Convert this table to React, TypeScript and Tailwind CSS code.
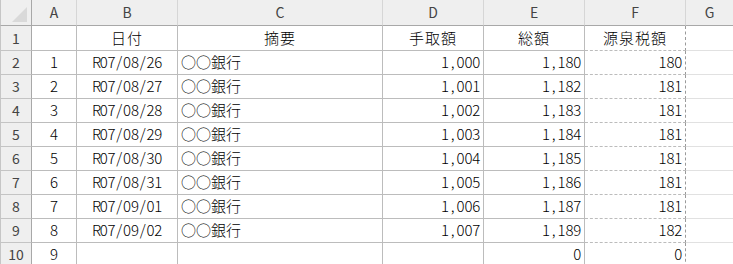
import React from 'react';

const cols = ['A', 'B', 'C', 'D', 'E', 'F', 'G'];

const rows: string[][] = [
  ['1', 'R07/08/26', '○○銀行', '1,000', '1,180', '180'],
  ['2', 'R07/08/27', '○○銀行', '1,001', '1,182', '181'],
  ['3', 'R07/08/28', '○○銀行', '1,002', '1,183', '181'],
  ['4', 'R07/08/29', '○○銀行', '1,003', '1,184', '181'],
  ['5', 'R07/08/30', '○○銀行', '1,004', '1,185', '181'],
  ['6', 'R07/08/31', '○○銀行', '1,005', '1,186', '181'],
  ['7', 'R07/09/01', '○○銀行', '1,006', '1,187', '181'],
  ['8', 'R07/09/02', '○○銀行', '1,007', '1,189', '182'],
  ['9', '', '', '', '0', '0'],
];

const titles = ['', '日付', '摘要', '手取額', '総額', '源泉税額'];

// alignment per data column A..F
const align = ['justify-center', 'justify-center', 'justify-start pl-[3px]', 'justify-end pr-[3px]', 'justify-end pr-[3px]', 'justify-end pr-[3px]'];

const hdrText = "font-['Noto_Sans_CJK_JP',sans-serif] text-[14px] text-[#444]";
const cellText = "font-['Noto_Sans_CJK_JP',sans-serif] text-[15px] font-light text-black";

// half-width monospace look of the sheet font
function Mono({ text }: { text: string }) {
  return (
    <span className="flex">
      {text.split('').map((ch, i) => (
        <span key={i} className="inline-block w-[7.8px] text-center">
          {ch}
        </span>
      ))}
    </span>
  );
}

function RowHeader({ n }: { n: number }) {
  return (
    <div className={`flex items-center justify-center bg-[#efefef] border-l border-l-[#c6c6c6] border-r border-r-[#a8a8a8] border-b border-b-[#c4c4c4] ${hdrText}`}>
      {n}
    </div>
  );
}

function Cell({ text, col }: { text: string; col: number }) {
  const edge = col === 5 ? 'border-r border-dashed border-r-[#9a9a9a]' : 'border-r border-r-[#bcbcbc]';
  return (
    <div className={`flex items-center overflow-hidden whitespace-nowrap bg-white border-b border-b-[#bcbcbc] ${edge} ${align[col]} ${cellText}`}>
      {col === 2 ? text : <Mono text={text} />}
    </div>
  );
}

export default function App() {
  return (
    <div className="w-[733px] h-[264px] overflow-hidden bg-white">
      <div className="grid grid-cols-[32px_45px_101px_205px_101px_101px_101px_1fr] grid-rows-[26px_25px_repeat(9,24px)]">
        {/* corner */}
        <div className="relative bg-[#efefef] border-l border-l-[#c6c6c6] border-r border-r-[#a8a8a8] border-b border-b-[#a8a8a8]">
          <svg className="absolute right-[4px] bottom-[3px]" width="15" height="15" viewBox="0 0 15 15">
            <polygon points="15,0 15,15 0,15" fill="#d9d9d9" />
          </svg>
        </div>
        {cols.map((c, i) => (
          <div
            key={c}
            className={`flex items-center justify-center bg-[#efefef] border-b border-b-[#a8a8a8] ${i < 6 ? 'border-r border-r-[#d6d6d6]' : ''} ${hdrText}`}
          >
            {c}
          </div>
        ))}

        {/* row 1: titles */}
        <RowHeader n={1} />
        {titles.map((t, i) => (
          <div
            key={i}
            className={`flex items-center justify-center bg-white border-b border-b-[#bcbcbc] ${i === 5 ? 'border-r border-dashed border-r-[#9a9a9a]' : 'border-r border-r-[#bcbcbc]'} ${cellText} tracking-[1px]`}
          >
            {t}
          </div>
        ))}
        <div className="bg-white border-b border-b-[#e1e1e1]" />

        {rows.map((r, ri) => (
          <React.Fragment key={ri}>
            <RowHeader n={ri + 2} />
            {r.map((t, ci) => (
              <Cell key={ci} text={t} col={ci} />
            ))}
            <div className="bg-white border-b border-b-[#e1e1e1]" />
          </React.Fragment>
        ))}
      </div>
    </div>
  );
}
